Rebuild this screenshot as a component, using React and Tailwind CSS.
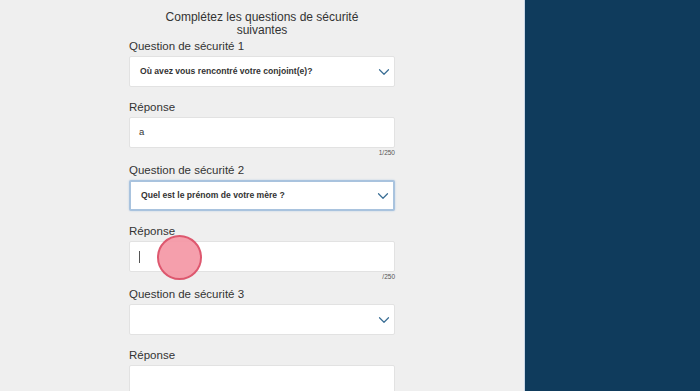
import { ChevronDown } from 'lucide-react';

function Label({ children }) {
  return <div className="text-[11.5px] leading-[12px] text-[#333] mb-[4px]">{children}</div>;
}

function SelectBox({ value, focused }) {
  return (
    <div
      className={
        'h-[31px] bg-white rounded-[2px] flex items-center justify-between pl-[10px] pr-[1px] ' +
        (focused
          ? 'border-2 border-[#a9c3de] shadow-[0_0_2px_#b7cde4]'
          : 'border border-[#e2e2e2]')
      }
    >
      <span className="text-[8.6px] font-bold text-[#333]">{value}</span>
      <ChevronDown size={18} strokeWidth={1.6} className="text-[#3a6e95]" />
    </div>
  );
}

function AnswerBox({ value, count, cursor }) {
  return (
    <div>
      <div className="h-[31px] bg-white border border-[#e2e2e2] rounded-[2px] flex items-center pl-[9px]">
        {value && <span className="text-[9.5px] text-[#333]">{value}</span>}
        {cursor && <span className="w-px h-[12px] bg-[#555]" />}
      </div>
      <div className="h-[9px] text-right text-[6.5px] leading-[9px] text-[#555]">{count}</div>
    </div>
  );
}

export default function App() {
  return (
    <div className="flex h-[391px] w-[700px] overflow-hidden" style={{ fontFamily: '"Liberation Sans", Arial, sans-serif' }}>
      <div className="w-[525px] bg-[#efefef] border-r border-[#c9d7e6] relative">
        <div className="w-[266px] ml-[129px] pt-[11px]">
          <h1 className="text-center text-[12px] leading-[13px] text-[#333] mb-[3px]">
            Complétez les questions de sécurité
            <br />
            suivantes
          </h1>

          <Label>Question de sécurité 1</Label>
          <SelectBox value="Où avez vous rencontré votre conjoint(e)?" />

          <div className="mt-[14px]">
            <Label>Réponse</Label>
            <AnswerBox value="a" count="1/250" />
          </div>

          <div className="mt-[7px]">
            <Label>Question de sécurité 2</Label>
            <SelectBox value="Quel est le prénom de votre mère ?" focused />
          </div>

          <div className="mt-[14px]">
            <Label>Réponse</Label>
            <AnswerBox cursor count="/250" />
          </div>

          <div className="mt-[7px]">
            <Label>Question de sécurité 3</Label>
            <SelectBox value="" />
          </div>

          <div className="mt-[14px]">
            <Label>Réponse</Label>
            <AnswerBox />
          </div>
        </div>

        {/* click indicator */}
        <div className="absolute left-[157px] top-[235px] w-[45px] h-[45px] rounded-full bg-[#f59aa8] border-2 border-[#dd5068] opacity-95" />
      </div>
      <div className="flex-1 bg-[#0f3b5c]" />
    </div>
  );
}
